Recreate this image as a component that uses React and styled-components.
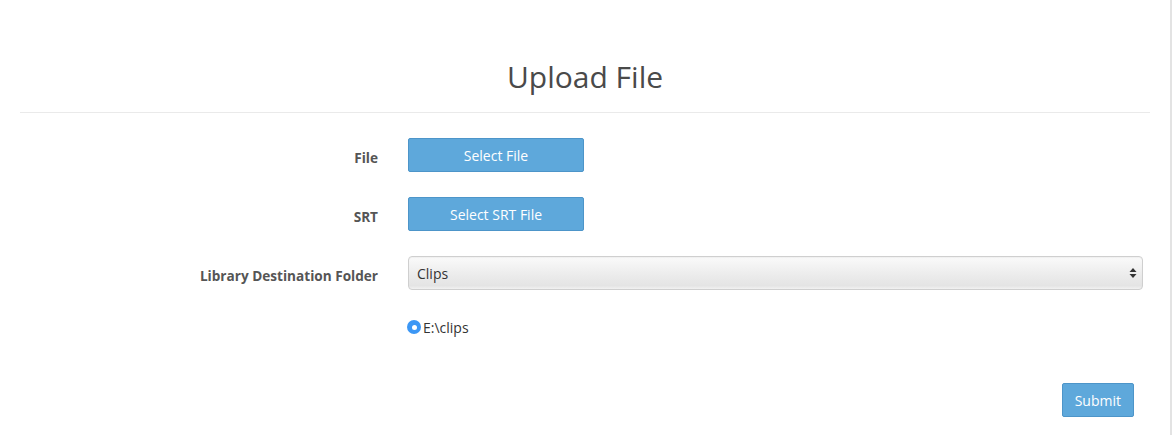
import React from 'react';
import styled, { createGlobalStyle } from 'styled-components';

const GlobalStyle = createGlobalStyle`
  body {
    margin: 0;
    background: #fff;
    font-family: "Open Sans", "Liberation Sans", sans-serif;
    font-size: 14px;
    color: #333;
  }
`;

const Page = styled.div`
  width: 1172px;
  height: 435px;
  border-right: 2px solid #e3e3e3;
  box-sizing: border-box;
  padding: 0 20px;
`;

const Title = styled.h2`
  margin: 0;
  padding-top: 60px;
  padding-bottom: 19px;
  font-size: 30px;
  line-height: 33px;
  font-weight: 400;
  color: #4a4a4a;
  text-align: center;
  border-bottom: 1px solid #eaeaea;
`;

const Form = styled.form`
  display: flex;
  flex-direction: column;
  padding-top: 25px;
`;

const Row = styled.div`
  display: grid;
  grid-template-columns: 358px 735px;
  column-gap: 30px;
  align-items: center;
  min-height: 34px;
  margin-bottom: ${p => p.gap || 25}px;
`;

const Label = styled.label`
  text-align: right;
  font-weight: 700;
  font-size: 13.6px;
  color: #555;
  padding-top: 4px;
`;

const Button = styled.button`
  font-family: inherit;
  font-size: 14px;
  color: #fff;
  background: #5ea8db;
  border: 1px solid #4d95c9;
  border-radius: 2px;
  height: 34px;
  width: ${p => p.width || 'auto'};
  padding: 0 12px;
  cursor: pointer;
`;

const SelectWrap = styled.div`
  position: relative;
  height: 34px;
`;

const Select = styled.select`
  appearance: none;
  width: 100%;
  height: 34px;
  font-family: inherit;
  font-size: 14px;
  color: #333;
  padding: 0 30px 0 8px;
  border: 1px solid #cfcfcf;
  border-radius: 4px;
  background: linear-gradient(#fafafa, #ececec 55%, #e4e4e4 90%, #f2f2f2);
  box-shadow: inset 0 1px 1px rgba(0, 0, 0, 0.04);
`;

const Arrows = styled.svg`
  position: absolute;
  right: 6px;
  top: 11px;
  pointer-events: none;
`;

const RadioLine = styled.label`
  display: flex;
  align-items: center;
  gap: 2px;
  font-size: 14px;
  color: #333;
  margin-left: -1px;
`;

const RadioDot = styled.span`
  width: 14px;
  height: 14px;
  border-radius: 50%;
  background: #3c97f5;
  display: flex;
  align-items: center;
  justify-content: center;
  &::after {
    content: '';
    width: 5px;
    height: 5px;
    border-radius: 50%;
    background: #fff;
  }
`;

const Footer = styled.div`
  display: flex;
  justify-content: flex-end;
  padding-right: 16px;
  margin-top: 14px;
`;

const App = () => {
  return (
    <>
      <GlobalStyle />
      <Page>
        <Title>Upload File</Title>
        <Form onSubmit={e => e.preventDefault()}>
          <Row>
            <Label>File</Label>
            <div><Button type="button" width="176px">Select File</Button></div>
          </Row>
          <Row>
            <Label>SRT</Label>
            <div><Button type="button" width="176px">Select SRT File</Button></div>
          </Row>
          <Row gap={20}>
            <Label>Library Destination Folder</Label>
            <SelectWrap>
              <Select defaultValue="clips">
                <option value="clips">Clips</option>
              </Select>
              <Arrows width="8" height="12" viewBox="0 0 8 12">
                <path d="M4 1 L7.5 5 H0.5 Z" fill="#333" />
                <path d="M4 11 L7.5 7 H0.5 Z" fill="#333" />
              </Arrows>
            </SelectWrap>
          </Row>
          <Row gap={0}>
            <span />
            <RadioLine>
              <RadioDot />
              E:\clips
            </RadioLine>
          </Row>
          <Footer>
            <Button type="submit">Submit</Button>
          </Footer>
        </Form>
      </Page>
    </>
  );
};

export default App;
